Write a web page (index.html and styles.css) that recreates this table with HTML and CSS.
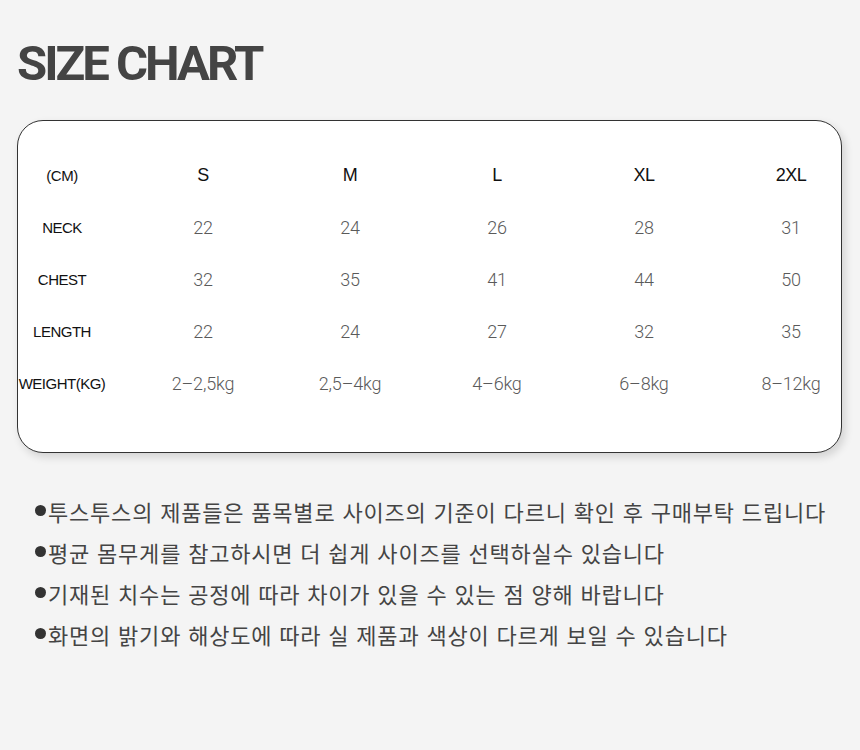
FILE: index.html
```html
<!DOCTYPE html>
<html lang="ko">
<head>
<meta charset="utf-8">
<title>Size Chart</title>
<link rel="stylesheet" href="styles.css">
</head>
<body>
<div class="page">
  <h1 class="title">SIZE CHART</h1>
  <div class="card">
    <div class="chart">
      <div class="lbl">(CM)</div>
      <div class="hd">S</div>
      <div class="hd">M</div>
      <div class="hd">L</div>
      <div class="hd">XL</div>
      <div class="hd">2XL</div>

      <div class="lbl">NECK</div>
      <div class="val">22</div>
      <div class="val">24</div>
      <div class="val">26</div>
      <div class="val">28</div>
      <div class="val">31</div>

      <div class="lbl">CHEST</div>
      <div class="val">32</div>
      <div class="val">35</div>
      <div class="val">41</div>
      <div class="val">44</div>
      <div class="val">50</div>

      <div class="lbl">LENGTH</div>
      <div class="val">22</div>
      <div class="val">24</div>
      <div class="val">27</div>
      <div class="val">32</div>
      <div class="val">35</div>

      <div class="lbl">WEIGHT(KG)</div>
      <div class="val">2–2,5kg</div>
      <div class="val">2,5–4kg</div>
      <div class="val">4–6kg</div>
      <div class="val">6–8kg</div>
      <div class="val">8–12kg</div>
    </div>
  </div>
  <ul class="notes">
    <li><span class="dot"></span>투스투스의 제품들은 품목별로 사이즈의 기준이 다르니 확인 후 구매부탁 드립니다</li>
    <li><span class="dot"></span>평균 몸무게를 참고하시면 더 쉽게 사이즈를 선택하실수 있습니다</li>
    <li><span class="dot"></span>기재된 치수는 공정에 따라 차이가 있을 수 있는 점 양해 바랍니다</li>
    <li><span class="dot"></span>화면의 밝기와 해상도에 따라 실 제품과 색상이 다르게 보일 수 있습니다</li>
  </ul>
</div>
</body>
</html>
```
FILE: styles.css
```css
html, body {
  margin: 0;
  padding: 0;
  background: #f4f4f4;
}
.page {
  width: 860px;
  height: 750px;
  padding-left: 17px;
  padding-top: 39px;
  box-sizing: border-box;
}
.title {
  margin: 0 0 32px 0;
  font-family: Roboto, "Liberation Sans", sans-serif;
  font-weight: 700;
  font-size: 49px;
  line-height: 49px;
  letter-spacing: -3px;
  color: #444;
}
.card {
  width: 825px;
  height: 333px;
  box-sizing: border-box;
  background: #fff;
  border: 1px solid #333;
  border-radius: 26px;
  box-shadow: 3px 4px 8px rgba(0, 0, 0, 0.14);
  padding-top: 28px;
}
.chart {
  display: grid;
  grid-template-columns: 88px repeat(5, 100px);
  grid-auto-rows: 52px;
  column-gap: 47px;
  align-items: center;
  text-align: center;
}
.lbl {
  font-family: "Liberation Sans", Arial, sans-serif;
  font-size: 15px;
  letter-spacing: -0.5px;
  color: #111;
}
.hd {
  font-family: "Liberation Sans", Arial, sans-serif;
  font-size: 18px;
  letter-spacing: -0.5px;
  color: #111;
}
.val {
  font-family: Roboto, "Liberation Sans", sans-serif;
  font-weight: 300;
  font-size: 18px;
  letter-spacing: -0.2px;
  color: #5a5a5a;
}
.notes {
  list-style: none;
  margin: 37px 0 0 0;
  padding: 0 0 0 18px;
}
.notes li {
  display: flex;
  align-items: center;
  height: 41px;
  font-family: "Noto Sans CJK KR", sans-serif;
  font-size: 22px;
  letter-spacing: 0.8px;
  color: #444;
  white-space: nowrap;
}
.dot {
  width: 11px;
  height: 11px;
  border-radius: 50%;
  background: #333;
  margin-right: 2px;
  flex: none;
}
```
